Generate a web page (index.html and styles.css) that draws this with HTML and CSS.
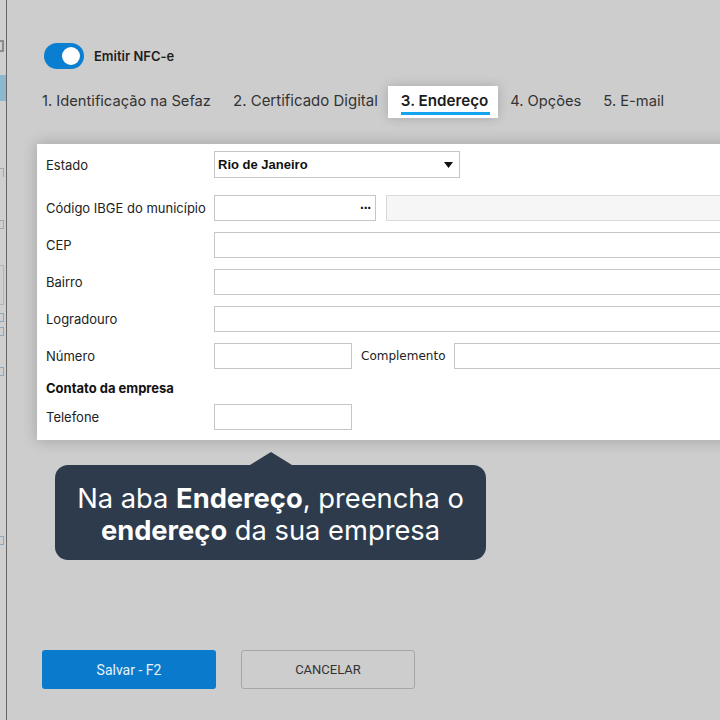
FILE: index.html
```html
<!DOCTYPE html>
<html lang="pt-BR">
<head>
    <meta charset="UTF-8">
    <title>Configurar NFC-e</title>
    <link rel="stylesheet" href="styles.css">
</head>
<body>

<div class="screen">
    <!-- page behind the dialog, mostly hidden -->
    <aside class="behind">
        <span class="bit bit-c"></span>
        <span class="bit bit-blue"></span>
        <span class="bit bit-f"></span>
        <span class="bit bit-e"></span>
        <span class="bit bit-o"></span>
        <span class="bit bit-n1"></span>
        <span class="bit bit-n2"></span>
        <span class="bit bit-n3"></span>
        <span class="bit bit-n4"></span>
    </aside>

    <section class="dialog">
        <div class="switch-row">
            <span class="switch on"><span class="knob"></span></span>
            <span class="switch-label">Emitir NFC-e</span>
        </div>

        <nav class="tabs">
            <a href="#" class="tab">1. Identificação na Sefaz</a>
            <a href="#" class="tab">2. Certificado Digital</a>
            <a href="#" class="tab active">3. Endereço</a>
            <a href="#" class="tab">4. Opções</a>
            <a href="#" class="tab">5. E-mail</a>
        </nav>

        <div class="form-panel">
            <div class="form-row first">
                <label>Estado</label>
                <div class="select">
                    <span>Rio de Janeiro</span>
                    <svg width="9" height="6" viewBox="0 0 9 6"><path d="M0 0h9L4.5 6z" fill="#111"/></svg>
                </div>
            </div>
            <div class="form-row">
                <label>Código IBGE do município</label>
                <div class="input short lookup"><span class="dots">···</span></div>
                <div class="input grow disabled"></div>
            </div>
            <div class="form-row">
                <label>CEP</label>
                <div class="input grow"></div>
            </div>
            <div class="form-row">
                <label>Bairro</label>
                <div class="input grow"></div>
            </div>
            <div class="form-row">
                <label>Logradouro</label>
                <div class="input grow"></div>
            </div>
            <div class="form-row">
                <label>Número</label>
                <div class="input small"></div>
                <span class="inline-label">Complemento</span>
                <div class="input grow"></div>
            </div>
            <h4 class="section-title">Contato da empresa</h4>
            <div class="form-row">
                <label>Telefone</label>
                <div class="input small"></div>
            </div>
        </div>

        <div class="tip">
            <p>Na aba <b>Endereço</b>, preencha o<br><b>endereço</b> da sua empresa</p>
        </div>

        <div class="actions">
            <button class="btn primary">Salvar - F2</button>
            <button class="btn ghost">CANCELAR</button>
        </div>
    </section>
</div>

</body>
</html>
```

FILE: styles.css
```css
/* Basic reset */
* {
    margin: 0;
    padding: 0;
    box-sizing: border-box;
}

body {
    font-family: Inter, "Noto Sans", sans-serif;
    background-color: #cdcdcd;
    color: #222;
    overflow: hidden;
}

.screen {
    display: flex;
    width: 720px;
    height: 720px;
    overflow: hidden;
}

/* Strip of the page behind */
.behind {
    width: 6px;
    flex-shrink: 0;
    position: relative;
    background-color: #cfcfcf;
    overflow: hidden;
}

.bit {
    position: absolute;
    left: 0;
    width: 4px;
    height: 9px;
    border: 1px solid #a4a8ab;
    border-left: none;
}

.bit-c { top: 40px; height: 12px; border-color: #8c8c8c; border-width: 2px; }
.bit-blue { top: 75px; width: 6px; height: 26px; background-color: #8db7cc; border: none; }
.bit-f { top: 168px; border-bottom: none; }
.bit-e { top: 220px; }
.bit-o { top: 265px; height: 40px; border-color: #b0b4b7; }
.bit-n1 { top: 313px; border-color: #8da8ba; }
.bit-n2 { top: 327px; border-color: #8da8ba; }
.bit-n3 { top: 367px; border-color: #8da8ba; }
.bit-n4 { top: 536px; border-color: #8da8ba; }

/* Dialog */
.dialog {
    flex: 1;
    border-left: 1px solid #666;
    padding: 43px 0 0 35px;
    display: flex;
    flex-direction: column;
    min-width: 0;
}

.switch-row {
    display: flex;
    align-items: center;
    gap: 10px;
    margin-left: 2px;
}

.switch {
    width: 40px;
    height: 26px;
    border-radius: 13px;
    background-color: #0a7fd2;
    position: relative;
}

.switch .knob {
    position: absolute;
    top: 4px;
    right: 4px;
    width: 18px;
    height: 18px;
    border-radius: 50%;
    background-color: #fff;
}

.switch-label {
    font-size: 13px;
    font-weight: 600;
    color: #1e1e1e;
}

/* Tabs */
.tabs {
    display: flex;
    align-items: center;
    margin-top: 17px;
    height: 32px;
}

.tab {
    text-decoration: none;
    color: #333;
    font-size: 14.7px;
    padding: 0 11px 2px;
    line-height: 30px;
    white-space: nowrap;
}

.tab:first-child {
    padding-left: 0;
}

.tab:nth-child(2) {
    font-size: 15px;
    padding-right: 12px;
}

.tab.active {
    background-color: #fff;
    font-size: 15.2px;
    font-weight: 600;
    color: #1c1c1c;
    padding: 0 10px 2px 13px;
    margin: 0 1px 0 -2px;
    box-shadow: 0 0 12px rgba(0, 0, 0, 0.18);
    position: relative;
}

.tab.active::after {
    content: "";
    position: absolute;
    left: 13px;
    right: 8px;
    bottom: 3px;
    height: 3px;
    background-color: #12a4ee;
}

/* Address form */
.form-panel {
    margin: 26px -40px 0 -5px;
    background-color: #fff;
    padding: 7px 0 10px 9px;
    box-shadow: 0 0 14px rgba(0, 0, 0, 0.22);
    display: flex;
    flex-direction: column;
    gap: 11px;
}

.form-row {
    display: flex;
    align-items: center;
    gap: 10px;
    height: 26px;
}

.form-row.first {
    height: 27px;
    margin-bottom: 6px;
}

.form-row label {
    width: 158px;
    font-size: 13px;
    color: #222;
    white-space: nowrap;
}

.select {
    width: 246px;
    height: 27px;
    border: 1px solid #c6c6c6;
    display: flex;
    align-items: center;
    justify-content: space-between;
    padding: 0 6px 0 3px;
    font-family: "Liberation Sans", Arial, sans-serif;
    font-size: 13px;
    font-weight: bold;
    color: #111;
}

.input {
    height: 26px;
    border: 1px solid #c6c6c6;
    background-color: #fff;
}

.input.short {
    width: 162px;
}

.input.small {
    width: 138px;
}

.input.grow {
    flex: 1;
}

.input.disabled {
    background-color: #f6f6f6;
    border-color: #d8d8d8;
}

.lookup {
    display: flex;
    align-items: center;
    justify-content: flex-end;
    padding-right: 4px;
}

.dots {
    font-family: "Liberation Sans", sans-serif;
    font-size: 14px;
    font-weight: bold;
    letter-spacing: -1px;
    color: #111;
}

.inline-label {
    font-family: "DejaVu Sans", Verdana, sans-serif;
    font-size: 12px;
    color: #222;
    margin: 0 -1px;
}

.section-title {
    font-size: 13px;
    font-weight: 700;
    color: #111;
    margin: 0 0 -3px;
}

/* Hint balloon */
.tip {
    position: relative;
    margin: 25px 0 0 13px;
    width: 431px;
    background-color: #2d3b4c;
    border-radius: 13px;
    padding: 18px 0 13px;
    text-align: center;
}

.tip::before {
    content: "";
    position: absolute;
    top: -13px;
    left: 195px;
    border-left: 21px solid transparent;
    border-right: 21px solid transparent;
    border-bottom: 13px solid #2d3b4c;
}

.tip p {
    font-family: Inter, "Noto Sans", sans-serif;
    font-size: 27.3px;
    line-height: 32px;
    color: #fff;
    white-space: nowrap;
}

.tip b {
    font-weight: 700;
}

/* Bottom buttons */
.actions {
    display: flex;
    gap: 25px;
    margin: auto 0 31px 0;
}

.btn {
    width: 174px;
    height: 39px;
    border-radius: 3px;
    font-family: Roboto, sans-serif;
    font-size: 13px;
    cursor: pointer;
}

.btn.primary {
    background-color: #0a7bcc;
    color: #e8f2fa;
    border: none;
    font-size: 14px;
}

.btn.ghost {
    background: none;
    border: 1px solid #a6a6a6;
    color: #333;
}
```
